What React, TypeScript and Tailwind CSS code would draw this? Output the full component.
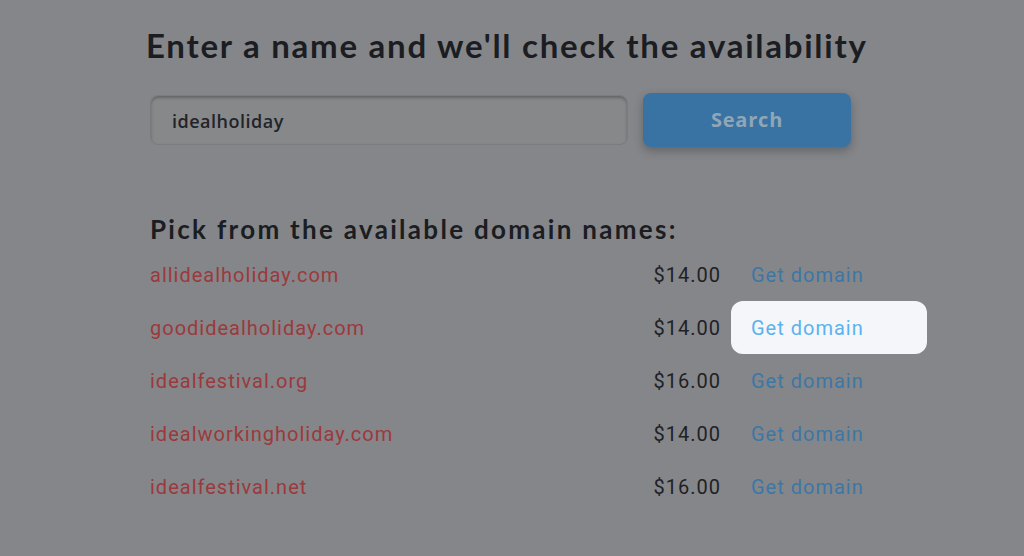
import React from "react";

const rows = [
  { name: "allidealholiday.com", price: "$14.00" },
  { name: "goodidealholiday.com", price: "$14.00", hi: true },
  { name: "idealfestival.org", price: "$16.00" },
  { name: "idealworkingholiday.com", price: "$14.00" },
  { name: "idealfestival.net", price: "$16.00" },
];

export default function App() {
  return (
    <div className="w-[1024px] h-[556px] bg-[#858689] overflow-hidden">
      <div className="pl-[146px] pt-[24px] flex flex-col">
        <h1 className="text-[33px] leading-[42px] font-bold text-[#1b1d22] [font-family:Lato,sans-serif] tracking-[1.75px]">
          Enter a name and we'll check the availability
        </h1>
        <div className="flex items-center mt-[27px] pl-[4px]">
          <div className="w-[478px] h-[50px] rounded-[8px] bg-[#87888a] shadow-[inset_0_2px_3px_rgba(0,0,0,0.25)] border border-[#7b7c7f] flex items-center pl-[21px] pt-[3px]">
            <span className="text-[18px] font-semibold text-[#222429] [font-family:'Open_Sans',sans-serif] tracking-[0.5px]">idealholiday</span>
          </div>
          <div className="ml-[15px] w-[208px] h-[54px] rounded-[8px] bg-[#3973a3] shadow-[0_4px_10px_rgba(0,0,0,0.25)] flex items-center justify-center">
            <span className="text-[20px] font-bold text-[#90a6b7] [font-family:'Open_Sans',sans-serif] tracking-[0.8px]">Search</span>
          </div>
        </div>
        <h2 className="mt-[66px] pl-[4px] text-[26px] leading-[32px] font-bold text-[#1b1d22] [font-family:Lato,sans-serif] tracking-[2.3px]">
          Pick from the available domain names:
        </h2>
        <div className="flex flex-col pl-[4px] mt-[3px] [font-family:Roboto,sans-serif] text-[20px] tracking-[1px]">
          {rows.map((r) => (
            <div key={r.name} className="flex items-center h-[53px]">
              <div className="w-[491px] text-[#9c393c]">{r.name}</div>
              <div className="w-[80px] text-right text-[#1f2126]">{r.price}</div>
              <div
                className={
                  r.hi
                    ? "ml-[10px] w-[196px] h-[53px] rounded-[12px] bg-[#f4f6fa] flex items-center pl-[20px] text-[#5ab3ee]"
                    : "ml-[10px] w-[196px] h-[53px] flex items-center pl-[20px] text-[#3c77a5]"
                }
              >
                Get domain
              </div>
            </div>
          ))}
        </div>
      </div>
    </div>
  );
}
